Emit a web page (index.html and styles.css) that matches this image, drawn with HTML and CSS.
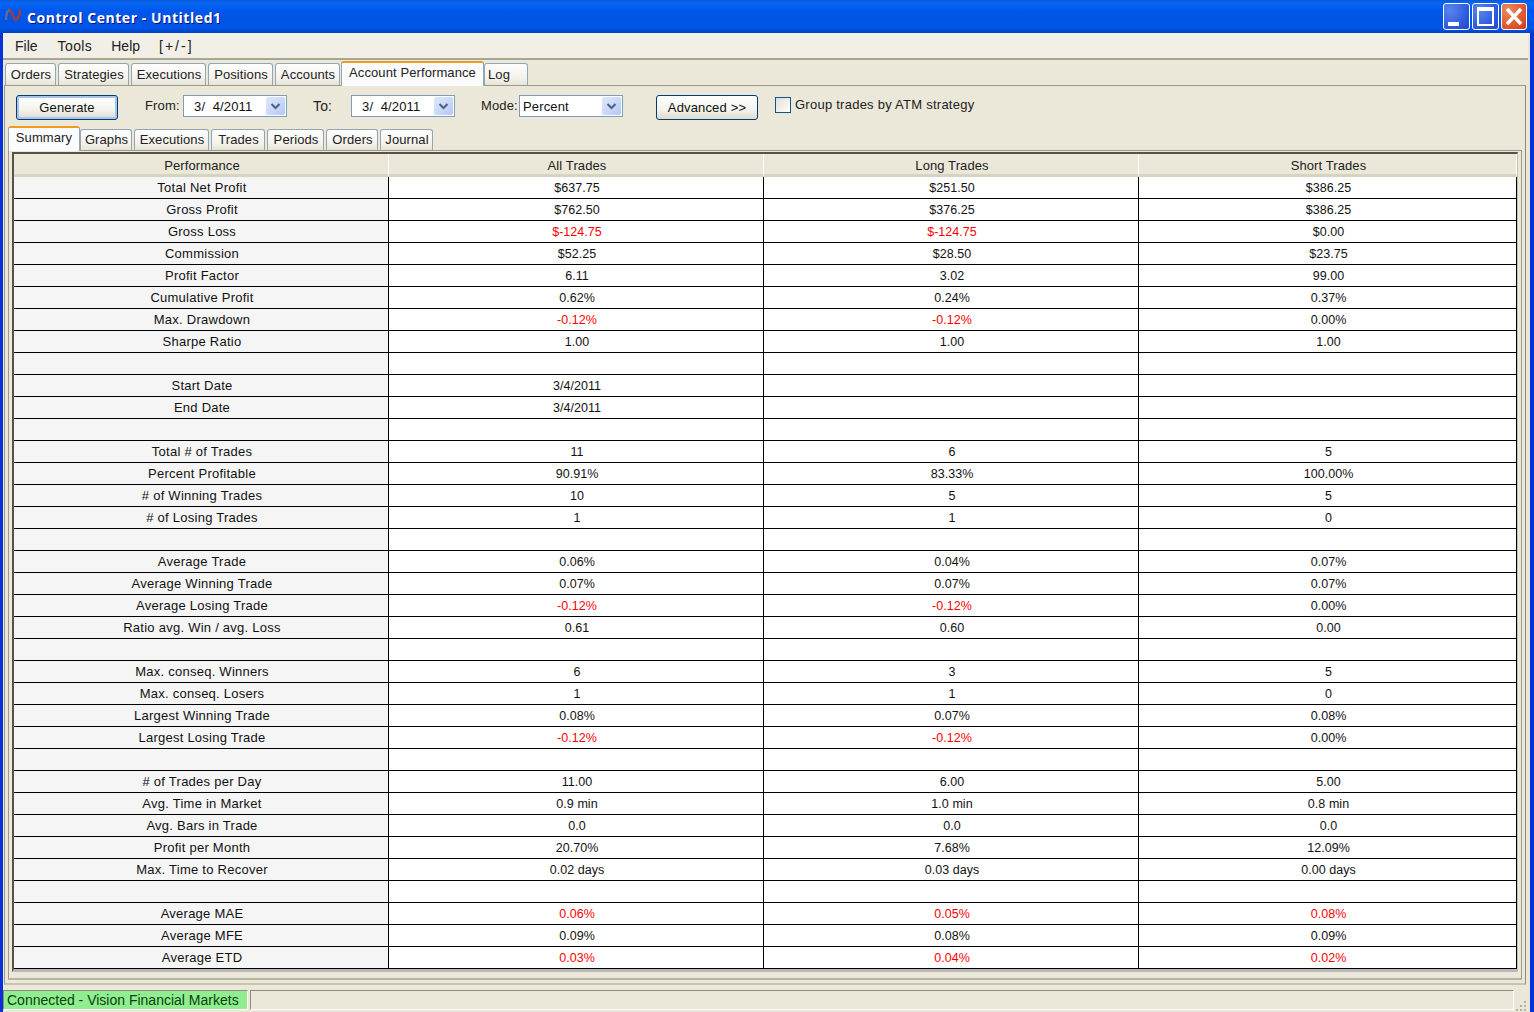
FILE: index.html
```html
<!DOCTYPE html>
<html lang="en">
<head>
<meta charset="utf-8">
<title>Control Center - Untitled1</title>
<link rel="stylesheet" href="styles.css">
</head>
<body>
<div class="window">
  <header class="titlebar">
    <svg class="logo" width="18" height="16" viewBox="0 0 18 16"><path d="M2 13C2 6 4 2 6.500 3.500" fill="none" stroke="#66708a" stroke-width="2.200"/><path d="M6 3c2 1 3 9 5.500 9.500S16 7 16.500 3" fill="none" stroke="#b23a2a" stroke-width="2.200"/></svg>
    <span class="title-text">Control Center - Untitled1</span>
    <div class="winbtns">
      <div class="winbtn"><svg width="27" height="27" viewBox="0 0 27 27"><rect x="5" y="19" width="11" height="4" fill="#fff"/></svg></div>
      <div class="winbtn"><svg width="27" height="27" viewBox="0 0 27 27"><path d="M5 4h17v19H5z M7 8v13h13V8z" fill="#fff" fill-rule="evenodd"/></svg></div>
      <div class="winbtn close"><svg width="26" height="27" viewBox="0 0 26 27"><path d="M6 6l14 15M20 6L6 21" stroke="#fff" stroke-width="3.400" fill="none"/></svg></div>
    </div>
  </header>
  <div class="body">
    <nav class="menubar"><span class="m1">File</span><span class="m2">Tools</span><span class="m3">Help</span><span class="m4">[+/-]</span></nav>
    <div class="tabs outer-tabs">
      <span class="tab t-orders">Orders</span><span class="tab t-strat">Strategies</span><span class="tab t-exec">Executions</span><span class="tab t-pos">Positions</span><span class="tab t-acc">Accounts</span><span class="tab active t-perf">Account Performance</span><span class="tab t-log">Log</span>
    </div>
    <section class="panel">
      <div class="toolbar">
        <button class="btn primary">Generate</button>
        <label class="lbl from">From:</label>
        <div class="combo date"><span class="combo-text">3/&nbsp; 4/2011</span><span class="arrow"><svg width="11" height="7" viewBox="0 0 11 7"><path d="M1.500 1l4 4 4-4" fill="none" stroke="#4d6185" stroke-width="2"/></svg></span></div>
        <label class="lbl to">To:</label>
        <div class="combo date"><span class="combo-text">3/&nbsp; 4/2011</span><span class="arrow"><svg width="11" height="7" viewBox="0 0 11 7"><path d="M1.500 1l4 4 4-4" fill="none" stroke="#4d6185" stroke-width="2"/></svg></span></div>
        <label class="lbl mode">Mode:</label>
        <div class="combo modebox"><span class="combo-text">Percent</span><span class="arrow"><svg width="11" height="7" viewBox="0 0 11 7"><path d="M1.500 1l4 4 4-4" fill="none" stroke="#4d6185" stroke-width="2"/></svg></span></div>
        <button class="btn adv">Advanced &gt;&gt;</button>
        <span class="check"></span>
        <span class="check-label">Group trades by ATM strategy</span>
      </div>
      <div class="tabs inner-tabs">
        <span class="tab active s-sum">Summary</span><span class="tab s-gr">Graphs</span><span class="tab s-ex">Executions</span><span class="tab s-tr">Trades</span><span class="tab s-pe">Periods</span><span class="tab s-or">Orders</span><span class="tab s-jo">Journal</span>
      </div>
      <div class="inner-panel">
        <table class="grid">
          <colgroup><col class="c0"><col class="c1"><col class="c1"><col class="c3"></colgroup>
          <thead><tr><th>Performance</th><th>All Trades</th><th>Long Trades</th><th>Short Trades</th></tr></thead>
          <tbody>
            <tr><td>Total Net Profit</td><td>$637.75</td><td>$251.50</td><td>$386.25</td></tr>
            <tr><td>Gross Profit</td><td>$762.50</td><td>$376.25</td><td>$386.25</td></tr>
            <tr><td>Gross Loss</td><td class="neg">$-124.75</td><td class="neg">$-124.75</td><td>$0.00</td></tr>
            <tr><td>Commission</td><td>$52.25</td><td>$28.50</td><td>$23.75</td></tr>
            <tr><td>Profit Factor</td><td>6.11</td><td>3.02</td><td>99.00</td></tr>
            <tr><td>Cumulative Profit</td><td>0.62%</td><td>0.24%</td><td>0.37%</td></tr>
            <tr><td>Max. Drawdown</td><td class="neg">-0.12%</td><td class="neg">-0.12%</td><td>0.00%</td></tr>
            <tr><td>Sharpe Ratio</td><td>1.00</td><td>1.00</td><td>1.00</td></tr>
            <tr><td></td><td></td><td></td><td></td></tr>
            <tr><td>Start Date</td><td>3/4/2011</td><td></td><td></td></tr>
            <tr><td>End Date</td><td>3/4/2011</td><td></td><td></td></tr>
            <tr><td></td><td></td><td></td><td></td></tr>
            <tr><td>Total # of Trades</td><td>11</td><td>6</td><td>5</td></tr>
            <tr><td>Percent Profitable</td><td>90.91%</td><td>83.33%</td><td>100.00%</td></tr>
            <tr><td># of Winning Trades</td><td>10</td><td>5</td><td>5</td></tr>
            <tr><td># of Losing Trades</td><td>1</td><td>1</td><td>0</td></tr>
            <tr><td></td><td></td><td></td><td></td></tr>
            <tr><td>Average Trade</td><td>0.06%</td><td>0.04%</td><td>0.07%</td></tr>
            <tr><td>Average Winning Trade</td><td>0.07%</td><td>0.07%</td><td>0.07%</td></tr>
            <tr><td>Average Losing Trade</td><td class="neg">-0.12%</td><td class="neg">-0.12%</td><td>0.00%</td></tr>
            <tr><td>Ratio avg. Win / avg. Loss</td><td>0.61</td><td>0.60</td><td>0.00</td></tr>
            <tr><td></td><td></td><td></td><td></td></tr>
            <tr><td>Max. conseq. Winners</td><td>6</td><td>3</td><td>5</td></tr>
            <tr><td>Max. conseq. Losers</td><td>1</td><td>1</td><td>0</td></tr>
            <tr><td>Largest Winning Trade</td><td>0.08%</td><td>0.07%</td><td>0.08%</td></tr>
            <tr><td>Largest Losing Trade</td><td class="neg">-0.12%</td><td class="neg">-0.12%</td><td>0.00%</td></tr>
            <tr><td></td><td></td><td></td><td></td></tr>
            <tr><td># of Trades per Day</td><td>11.00</td><td>6.00</td><td>5.00</td></tr>
            <tr><td>Avg. Time in Market</td><td>0.9 min</td><td>1.0 min</td><td>0.8 min</td></tr>
            <tr><td>Avg. Bars in Trade</td><td>0.0</td><td>0.0</td><td>0.0</td></tr>
            <tr><td>Profit per Month</td><td>20.70%</td><td>7.68%</td><td>12.09%</td></tr>
            <tr><td>Max. Time to Recover</td><td>0.02 days</td><td>0.03 days</td><td>0.00 days</td></tr>
            <tr><td></td><td></td><td></td><td></td></tr>
            <tr><td>Average MAE</td><td class="neg">0.06%</td><td class="neg">0.05%</td><td class="neg">0.08%</td></tr>
            <tr><td>Average MFE</td><td>0.09%</td><td>0.08%</td><td>0.09%</td></tr>
            <tr><td>Average ETD</td><td class="neg">0.03%</td><td class="neg">0.04%</td><td class="neg">0.02%</td></tr>
          </tbody>
        </table>
      </div>
    </section>
    <footer class="statusbar">
      <span class="status-ok">Connected - Vision Financial Markets</span>
      <span class="status-rest"></span>
      <svg class="grip" width="12" height="12" viewBox="0 0 12 12"><path d="M8 1h2v2H8zM4 5h2v2H4zM8 5h2v2H8zM0 9h2v2H0zM4 9h2v2H4zM8 9h2v2H8z" fill="#b5b09c"/></svg>
    </footer>
  </div>
</div>
</body>
</html>
```
FILE: styles.css
```css
* { box-sizing: border-box; }
html, body { margin: 0; padding: 0; }
body { width: 1534px; height: 1012px; overflow: hidden; font-family: "Liberation Sans", Arial, sans-serif; font-size: 13px; color: #111; }

.window { width: 1534px; height: 1012px; display: flex; flex-direction: column; background: #0831d9; }

.titlebar { height: 33px; flex: none; display: flex; align-items: center; padding-left: 4px; padding-right: 7px; background: linear-gradient(#0a57d8 0, #0a5fe8 4%, #0366f0 12%, #0058ee 30%, #0054e3 60%, #0055ea 85%, #0042c0 100%); }
.logo { flex: none; margin-right: 5px; margin-top: -3px; }
.title-text { color: #fff; font-family: "Open Sans", sans-serif; font-weight: 700; font-size: 14px; letter-spacing: 0.55px; text-shadow: 1px 1px 0 #0f1089; padding-top: 1px; }
.winbtns { margin-left: auto; display: flex; gap: 2px; margin-top: -1px; }
.winbtn { width: 27px; height: 27px; border: 1px solid #fff; border-radius: 3px; background: radial-gradient(circle at 25% 25%, #5a86ee, #2a56dc 70%, #2547c8); overflow: hidden; }
.winbtn svg { display: block; margin: -1px; }
.winbtn.close { width: 26px; background: radial-gradient(circle at 25% 25%, #ea8a62, #e0552a 65%, #c83c16); }

.body { flex: 1; min-height: 0; margin: 0 4px 0 3px; display: flex; flex-direction: column; background: #ebe8d9; }

.menubar { height: 27px; flex: none; display: flex; align-items: center; font-size: 14px; background: #f1efe6; border-bottom: 2px solid #a8a692; margin-right: 2px; color: #222; }
.m1 { margin-left: 12px; }
.m2 { margin-left: 20px; letter-spacing: 0.4px; }
.m3 { margin-left: 19px; }
.m4 { margin-left: 19px; letter-spacing: 2px; }

.tabs { display: flex; align-items: flex-end; flex: none; letter-spacing: 0.1px; }
.outer-tabs { height: 25px; padding-left: 2px; }
.inner-tabs { height: 24px; padding-left: 3px; position: relative; z-index: 1; }
.tab { height: 22px; display: flex; align-items: center; justify-content: center; padding: 0 0 1px 1px; border: 1px solid #91a7b4; border-bottom: 0; border-radius: 3px 3px 0 0; background: linear-gradient(#fff, #f3f1ea 70%, #e6e3d5); color: #222; margin-right: 2px; white-space: nowrap; }
.inner-tabs .tab { height: 21px; padding-bottom: 1px; }
.tab.active, .inner-tabs .tab.active { height: 25px; background: #fcfcfe; border: 1px solid #91a7b4; border-top: 2px solid #ee9b22; border-bottom: 0; margin-right: 0; margin-bottom: -1px; padding: 0 0 4px 0; position: relative; z-index: 2; }
.t-orders { width: 51px; }
.t-strat { width: 71px; }
.t-exec { width: 75px; }
.t-pos { width: 65px; }
.t-acc { width: 65px; margin-right: 1px; }
.t-perf { width: 143px; }
.t-log { width: 44px; margin-right: 0; justify-content: flex-start; padding-left: 3px; }
.s-sum { width: 72px; }
.s-gr { width: 52px; }
.s-ex { width: 75px; }
.s-tr { width: 54px; }
.s-pe { width: 57px; }
.s-or { width: 52px; }
.s-jo { width: 53px; }

.panel { flex: 1; min-height: 0; margin: 0 4px 0 1px; border: 1px solid #9d9b87; border-right-color: #8c8a78; border-bottom: 2px solid #c7c4b1; background: #ebe8d9; display: flex; flex-direction: column; }

.toolbar { height: 40px; flex: none; display: flex; align-items: flex-start; padding: 9px 0 0 11px; letter-spacing: 0.15px; }
.btn { height: 25px; font: inherit; letter-spacing: inherit; color: #111; background: linear-gradient(#fff, #f4f3ec 60%, #dedbcd); border: 1px solid #003c74; border-radius: 3px; padding: 0; }
.btn.primary { width: 102px; box-shadow: inset 0 0 0 2px #aac4ec; }
.btn.adv { width: 102px; margin-left: 33px; }
.lbl { line-height: 22px; color: #222; }
.from { margin-left: 27px; width: 38px; }
.to { margin-left: 26px; width: 38px; font-size: 14px; }
.mode { margin-left: 26px; width: 38px; }
.combo { height: 22px; display: flex; align-items: center; background: #fff; border: 1px solid #7f9db9; justify-content: space-between; }
.combo.date { width: 104px; padding-left: 10px; }
.combo.modebox { width: 104px; padding-left: 3px; }
.combo-text { white-space: nowrap; }
.arrow { width: 19px; height: 18px; margin-right: 1px; display: flex; align-items: center; justify-content: center; border-radius: 2px; background: linear-gradient(135deg, #dfe8fd, #b4c8f6); }
.check { width: 16px; height: 16px; margin-left: 17px; margin-top: 2px; border: 1px solid #1c5180; background: linear-gradient(135deg, #dfded7, #fff); flex: none; }
.check-label { margin-left: 4px; line-height: 19px; color: #222; letter-spacing: 0.25px; }

.inner-panel { flex: 1; min-height: 0; margin: 0 3px 3px 3px; padding: 1px 0 0 3px; border: 1px solid #9d9b87; border-bottom: 2px solid #b8b5a3; background: #ebe8d9; }

.grid { border-collapse: separate; border-spacing: 0; table-layout: fixed; width: 1506px; background: #fff; border: 2px solid #55534a; border-right: 1px solid #c4c2b4; border-bottom: 3px solid #b9b9b9; }
.c0, .c1 { width: 375px; }
.c3 { width: 378px; }
.grid th { height: 23px; padding: 2px 0 0 2px; font-weight: 400; background: #ebe8d9; border-right: 1px solid #fff; border-bottom: 3px solid #d6d3c1; text-align: center; color: #222; letter-spacing: 0.1px; }
.grid td { height: 22px; padding: 1px 0 0 2px; text-align: center; vertical-align: top; line-height: 20px; border-right: 1px solid #000; border-bottom: 1px solid #000; color: #111; font-size: 12.5px; letter-spacing: 0.05px; }
.grid td:first-child { background: #f5f5f5; font-size: 13px; letter-spacing: 0.25px; padding: 0 0 0 2px; line-height: 21px; }
.neg { color: #f00 !important; }

.statusbar { flex: none; height: 27px; display: flex; align-items: flex-start; padding-top: 5px; position: relative; }
.status-ok { width: 245px; height: 20px; background: #90ee90; border: 1px solid #fff; border-top-color: #8e8c7a; border-left-color: #8e8c7a; padding-left: 3px; line-height: 19px; font-size: 14px; color: #0a3f0a; flex: none; white-space: nowrap; }
.status-rest { flex: 1; height: 20px; margin: 0 16px 0 2px; border: 1px solid #fff; border-top-color: #8e8c7a; border-left-color: #8e8c7a; }
.grip { position: absolute; right: 2px; bottom: 0; }
```
